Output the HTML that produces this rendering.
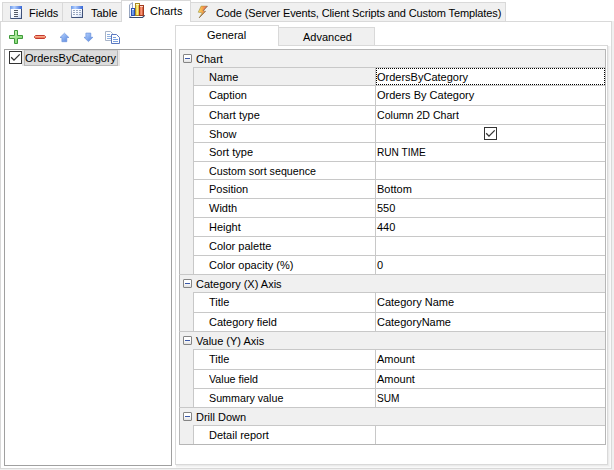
<!DOCTYPE html>
<html><head><meta charset="utf-8">
<style>
*{box-sizing:border-box;margin:0;padding:0}
html,body{width:614px;height:470px;overflow:hidden;background:#fff}
body{position:relative;font-family:"Liberation Sans",sans-serif;font-size:11px;color:#000}
.a{position:absolute}
.t{position:absolute;white-space:nowrap;line-height:13px}
.tab{position:absolute;background:#f0f0f0;border:1px solid #d9d9d9;border-bottom:none}
.hl{position:absolute;height:1px;background:#c8c8c8}
.vl{position:absolute;width:1px;background:#c8c8c8}
.cb{position:absolute;left:183px;width:9px;height:9px;border:1px solid #858585;border-radius:1px;background:linear-gradient(#fff 40%,#e2e2e2)}
.cb::after{content:"";position:absolute;left:1px;top:3px;width:5px;height:1px;background:#3a58a8}
.ck{position:absolute;width:13px;height:13px;border:1px solid #333;background:#fff}
</style></head><body>
<!-- main panel -->
<div class="a" style="left:612px;top:21px;width:2px;height:449px;background:#f0f0f0"></div>
<div class="a" style="left:0;top:469px;width:614px;height:1px;background:#f0f0f0"></div>
<div class="a" style="left:0;top:21px;width:612px;height:448px;border:1px solid #d9d9d9;background:#fff"></div>

<!-- top tabs -->
<div class="tab" style="left:2px;top:2px;width:61px;height:19px"></div>
<div class="tab" style="left:62px;top:2px;width:60px;height:19px"></div>
<div class="tab" style="left:190px;top:2px;width:316px;height:19px"></div>
<div class="a" style="left:121px;top:0;width:70px;height:22px;background:#fff;border:1px solid #d9d9d9;border-bottom:none"></div>

<div class="t" style="left:29px;top:7px">Fields</div>
<div class="t" style="left:91px;top:7px">Table</div>
<div class="t" style="left:150px;top:5px">Charts</div>
<div class="t" style="left:216px;top:7px;letter-spacing:-0.12px">Code (Server Events, Client Scripts and Custom Templates)</div>

<!-- listbox -->
<div class="a" style="left:4px;top:49px;width:168px;height:417px;border:1px solid #a0a0a0;background:#fff"></div>
<div class="a" style="left:9px;top:51px;width:13px;height:13px;border:1px solid #333"></div>
<div class="a" style="left:22px;top:50px;width:98px;height:16px;background:#e6e6e6"></div>
<div class="a" style="left:24px;top:50px;width:94px;height:16px;background:#dcdcdc;border:1px solid #b8b8b8;border-top-color:#cfcfcf"></div>
<div class="t" style="left:25px;top:52px">OrdersByCategory</div>

<!-- right page -->
<div class="a" style="left:175px;top:45px;width:433px;height:420px;border:1px solid #d9d9d9;background:#fff"></div>
<div class="a" style="left:608px;top:46px;width:1px;height:420px;background:#ebebeb"></div>
<div class="a" style="left:609px;top:46px;width:1px;height:421px;background:#f3f3f3"></div>
<div class="a" style="left:610px;top:46px;width:1px;height:422px;background:#f9f9f9"></div>
<div class="a" style="left:176px;top:465px;width:433px;height:1px;background:#ebebeb"></div>
<div class="a" style="left:176px;top:466px;width:434px;height:1px;background:#f3f3f3"></div>
<div class="a" style="left:176px;top:467px;width:435px;height:1px;background:#f9f9f9"></div>
<div class="a" style="left:278px;top:27px;width:97px;height:19px;border:1px solid #d9d9d9;background:#f0f0f0"></div>
<div class="a" style="left:175px;top:25px;width:104px;height:21px;border:1px solid #d9d9d9;border-bottom:none;background:#fff"></div>
<div class="t" style="left:207px;top:29px">General</div>
<div class="t" style="left:303px;top:31px">Advanced</div>

<!-- property grid -->
<div class="a" style="left:179px;top:49px;width:427px;height:396px;border:1px solid #b6b6b6;background:#f0f0f0"></div>
<div class="cb" style="top:54px"></div>
<div class="t" style="left:196px;top:53px">Chart</div>
<div class="hl" style="left:193px;top:67px;width:412px"></div>
<div class="a" style="left:194px;top:68px;width:181px;height:17px;background:#f0f0f0"></div>
<div class="a" style="left:376px;top:68px;width:229px;height:17px;background:#fff"></div>
<div class="vl" style="left:193px;top:67px;height:18px"></div>
<div class="vl" style="left:375px;top:67px;height:18px"></div>
<div class="t" style="left:209px;top:71px">Name</div>
<div class="t" style="left:377px;top:71px">OrdersByCategory</div>
<div class="a" style="left:376px;top:68px;width:229px;height:17px;border:1px dotted #000"></div>
<div class="hl" style="left:193px;top:85px;width:412px"></div>
<div class="a" style="left:194px;top:86px;width:181px;height:19px;background:#fff"></div>
<div class="a" style="left:376px;top:86px;width:229px;height:19px;background:#fff"></div>
<div class="vl" style="left:193px;top:85px;height:20px"></div>
<div class="vl" style="left:375px;top:85px;height:20px"></div>
<div class="t" style="left:209px;top:89px">Caption</div>
<div class="t" style="left:377px;top:89px">Orders By Category</div>
<div class="hl" style="left:193px;top:105px;width:412px"></div>
<div class="a" style="left:194px;top:106px;width:181px;height:18px;background:#fff"></div>
<div class="a" style="left:376px;top:106px;width:229px;height:18px;background:#fff"></div>
<div class="vl" style="left:193px;top:105px;height:19px"></div>
<div class="vl" style="left:375px;top:105px;height:19px"></div>
<div class="t" style="left:209px;top:109px">Chart type</div>
<div class="t" style="left:377px;top:109px;transform:scaleX(0.963);transform-origin:0 0">Column 2D Chart</div>
<div class="hl" style="left:193px;top:124px;width:412px"></div>
<div class="a" style="left:194px;top:125px;width:181px;height:17px;background:#fff"></div>
<div class="a" style="left:376px;top:125px;width:229px;height:17px;background:#fff"></div>
<div class="vl" style="left:193px;top:124px;height:18px"></div>
<div class="vl" style="left:375px;top:124px;height:18px"></div>
<div class="t" style="left:209px;top:128px">Show</div>
<div class="ck" style="left:484px;top:127px"></div><svg class="a" style="left:484px;top:127px" width="13" height="13" viewBox="0 0 13 13"><path d="M2.2 6.3 L5 9.1 L10.7 3.4" fill="none" stroke="#333" stroke-width="1.3"/></svg>
<div class="hl" style="left:193px;top:142px;width:412px"></div>
<div class="a" style="left:194px;top:143px;width:181px;height:18px;background:#fff"></div>
<div class="a" style="left:376px;top:143px;width:229px;height:18px;background:#fff"></div>
<div class="vl" style="left:193px;top:142px;height:19px"></div>
<div class="vl" style="left:375px;top:142px;height:19px"></div>
<div class="t" style="left:209px;top:146px">Sort type</div>
<div class="t" style="left:377px;top:146px;transform:scaleX(0.92);transform-origin:0 0">RUN TIME</div>
<div class="hl" style="left:193px;top:161px;width:412px"></div>
<div class="a" style="left:194px;top:162px;width:181px;height:17px;background:#fff"></div>
<div class="a" style="left:376px;top:162px;width:229px;height:17px;background:#fff"></div>
<div class="vl" style="left:193px;top:161px;height:18px"></div>
<div class="vl" style="left:375px;top:161px;height:18px"></div>
<div class="t" style="left:209px;top:165px;transform:scaleX(0.972);transform-origin:0 0">Custom sort sequence</div>
<div class="hl" style="left:193px;top:179px;width:412px"></div>
<div class="a" style="left:194px;top:180px;width:181px;height:18px;background:#fff"></div>
<div class="a" style="left:376px;top:180px;width:229px;height:18px;background:#fff"></div>
<div class="vl" style="left:193px;top:179px;height:19px"></div>
<div class="vl" style="left:375px;top:179px;height:19px"></div>
<div class="t" style="left:209px;top:183px">Position</div>
<div class="t" style="left:377px;top:183px">Bottom</div>
<div class="hl" style="left:193px;top:198px;width:412px"></div>
<div class="a" style="left:194px;top:199px;width:181px;height:18px;background:#fff"></div>
<div class="a" style="left:376px;top:199px;width:229px;height:18px;background:#fff"></div>
<div class="vl" style="left:193px;top:198px;height:19px"></div>
<div class="vl" style="left:375px;top:198px;height:19px"></div>
<div class="t" style="left:209px;top:202px">Width</div>
<div class="t" style="left:377px;top:202px">550</div>
<div class="hl" style="left:193px;top:217px;width:412px"></div>
<div class="a" style="left:194px;top:218px;width:181px;height:18px;background:#fff"></div>
<div class="a" style="left:376px;top:218px;width:229px;height:18px;background:#fff"></div>
<div class="vl" style="left:193px;top:217px;height:19px"></div>
<div class="vl" style="left:375px;top:217px;height:19px"></div>
<div class="t" style="left:209px;top:221px">Height</div>
<div class="t" style="left:377px;top:221px">440</div>
<div class="hl" style="left:193px;top:236px;width:412px"></div>
<div class="a" style="left:194px;top:237px;width:181px;height:18px;background:#fff"></div>
<div class="a" style="left:376px;top:237px;width:229px;height:18px;background:#fff"></div>
<div class="vl" style="left:193px;top:236px;height:19px"></div>
<div class="vl" style="left:375px;top:236px;height:19px"></div>
<div class="t" style="left:209px;top:240px">Color palette</div>
<div class="hl" style="left:193px;top:255px;width:412px"></div>
<div class="a" style="left:194px;top:256px;width:181px;height:18px;background:#fff"></div>
<div class="a" style="left:376px;top:256px;width:229px;height:18px;background:#fff"></div>
<div class="vl" style="left:193px;top:255px;height:19px"></div>
<div class="vl" style="left:375px;top:255px;height:19px"></div>
<div class="t" style="left:209px;top:259px">Color opacity (%)</div>
<div class="t" style="left:377px;top:259px">0</div>
<div class="hl" style="left:179px;top:274px;width:426px"></div>
<div class="cb" style="top:279px"></div>
<div class="t" style="left:196px;top:278px">Category (X) Axis</div>
<div class="hl" style="left:193px;top:292px;width:412px"></div>
<div class="a" style="left:194px;top:293px;width:181px;height:19px;background:#fff"></div>
<div class="a" style="left:376px;top:293px;width:229px;height:19px;background:#fff"></div>
<div class="vl" style="left:193px;top:292px;height:20px"></div>
<div class="vl" style="left:375px;top:292px;height:20px"></div>
<div class="t" style="left:209px;top:296px">Title</div>
<div class="t" style="left:377px;top:296px">Category Name</div>
<div class="hl" style="left:193px;top:312px;width:412px"></div>
<div class="a" style="left:194px;top:313px;width:181px;height:18px;background:#fff"></div>
<div class="a" style="left:376px;top:313px;width:229px;height:18px;background:#fff"></div>
<div class="vl" style="left:193px;top:312px;height:19px"></div>
<div class="vl" style="left:375px;top:312px;height:19px"></div>
<div class="t" style="left:209px;top:316px">Category field</div>
<div class="t" style="left:377px;top:316px">CategoryName</div>
<div class="hl" style="left:179px;top:331px;width:426px"></div>
<div class="cb" style="top:336px"></div>
<div class="t" style="left:196px;top:335px">Value (Y) Axis</div>
<div class="hl" style="left:193px;top:349px;width:412px"></div>
<div class="a" style="left:194px;top:350px;width:181px;height:19px;background:#fff"></div>
<div class="a" style="left:376px;top:350px;width:229px;height:19px;background:#fff"></div>
<div class="vl" style="left:193px;top:349px;height:20px"></div>
<div class="vl" style="left:375px;top:349px;height:20px"></div>
<div class="t" style="left:209px;top:353px">Title</div>
<div class="t" style="left:377px;top:353px">Amount</div>
<div class="hl" style="left:193px;top:369px;width:412px"></div>
<div class="a" style="left:194px;top:370px;width:181px;height:18px;background:#fff"></div>
<div class="a" style="left:376px;top:370px;width:229px;height:18px;background:#fff"></div>
<div class="vl" style="left:193px;top:369px;height:19px"></div>
<div class="vl" style="left:375px;top:369px;height:19px"></div>
<div class="t" style="left:209px;top:373px;transform:scaleX(0.97);transform-origin:0 0">Value field</div>
<div class="t" style="left:377px;top:373px">Amount</div>
<div class="hl" style="left:193px;top:388px;width:412px"></div>
<div class="a" style="left:194px;top:389px;width:181px;height:18px;background:#fff"></div>
<div class="a" style="left:376px;top:389px;width:229px;height:18px;background:#fff"></div>
<div class="vl" style="left:193px;top:388px;height:19px"></div>
<div class="vl" style="left:375px;top:388px;height:19px"></div>
<div class="t" style="left:209px;top:392px;transform:scaleX(0.973);transform-origin:0 0">Summary value</div>
<div class="t" style="left:377px;top:392px;transform:scaleX(0.92);transform-origin:0 0">SUM</div>
<div class="hl" style="left:179px;top:407px;width:426px"></div>
<div class="cb" style="top:412px"></div>
<div class="t" style="left:196px;top:411px">Drill Down</div>
<div class="hl" style="left:193px;top:425px;width:412px"></div>
<div class="a" style="left:194px;top:426px;width:181px;height:18px;background:#fff"></div>
<div class="a" style="left:376px;top:426px;width:229px;height:18px;background:#fff"></div>
<div class="vl" style="left:193px;top:425px;height:19px"></div>
<div class="vl" style="left:375px;top:425px;height:19px"></div>
<div class="t" style="left:209px;top:429px">Detail report</div>
<!-- icons: fields -->
<svg class="a" style="left:10px;top:6px" width="12" height="13" viewBox="0 0 12 13">
<defs><linearGradient id="tb" x1="0" y1="0" x2="1" y2="0"><stop offset="0" stop-color="#6a98e8"/><stop offset=".35" stop-color="#b4d0ff"/><stop offset="1" stop-color="#3565d5"/></linearGradient>
<linearGradient id="bd" x1="0" y1="0" x2="1" y2="1"><stop offset="0" stop-color="#ffffff"/><stop offset=".6" stop-color="#f4f8ff"/><stop offset="1" stop-color="#c4d4f0"/></linearGradient>
<linearGradient id="lb" x1="0" y1="0" x2="0" y2="1"><stop offset="0" stop-color="#b8c4dc"/><stop offset="1" stop-color="#6a7a9a"/></linearGradient></defs>
<rect x="0" y="0" width="12" height="13" fill="#3e5078"/>
<rect x="0" y="3" width="1" height="10" fill="url(#lb)"/>
<rect x="0" y="0" width="12" height="3" fill="url(#tb)"/>
<rect x="1" y="3" width="10" height="9" fill="url(#bd)"/>
<g fill="#545a66"><rect x="4" y="4" width="4" height="1"/><rect x="4" y="6" width="4" height="1"/><rect x="4" y="8" width="4" height="1"/><rect x="4" y="10" width="4" height="1"/></g>
</svg>
<!-- table -->
<svg class="a" style="left:71px;top:6px" width="12" height="12" viewBox="0 0 12 12">
<rect x="0" y="0" width="12" height="12" fill="#3e5078"/>
<rect x="0" y="3" width="1" height="9" fill="url(#lb)"/>
<rect x="0" y="0" width="12" height="3" fill="url(#tb)"/>
<rect x="1" y="3" width="10" height="8" fill="url(#bd)"/>
<g fill="#9aa8c0"><rect x="2" y="4" width="2" height="1"/><rect x="5" y="4" width="2" height="1"/><rect x="8" y="4" width="2" height="1"/>
<rect x="2" y="6" width="2" height="1"/><rect x="5" y="6" width="2" height="1"/><rect x="8" y="6" width="2" height="1"/>
<rect x="2" y="8" width="2" height="1"/><rect x="5" y="8" width="2" height="1"/><rect x="8" y="8" width="2" height="1"/></g>
</svg>
<!-- charts -->
<svg class="a" style="left:129px;top:2px" width="17" height="17" viewBox="0 0 17 17">
<defs>
<linearGradient id="bb" x1="0" x2="1"><stop offset="0" stop-color="#3a6ad8"/><stop offset=".45" stop-color="#8ab8f8"/><stop offset="1" stop-color="#2a58c0"/></linearGradient>
<linearGradient id="yb" x1="0" x2="1"><stop offset="0" stop-color="#e0b818"/><stop offset=".45" stop-color="#fff490"/><stop offset="1" stop-color="#d0a000"/></linearGradient>
<linearGradient id="rb" x1="0" x2="1"><stop offset="0" stop-color="#d85030"/><stop offset=".45" stop-color="#ffa080"/><stop offset="1" stop-color="#b83818"/></linearGradient>
</defs>
<path d="M0.5 2.8 L3.5 0.6 L3.5 13 L0.5 15.5 Z" fill="#f4f7fc" stroke="#98a6c0" stroke-width="1"/>
<path d="M0.5 15.5 L13.5 15.5 L15.8 13.3" fill="none" stroke="#34486e" stroke-width="1.1"/>
<rect x="2.5" y="6.5" width="3" height="7" fill="url(#bb)" stroke="#2a50b0" stroke-width="1"/>
<rect x="6.5" y="1.5" width="4" height="12" fill="url(#yb)" stroke="#a88a20" stroke-width="1"/>
<rect x="10.5" y="3.5" width="4" height="10" fill="url(#rb)" stroke="#a03a20" stroke-width="1"/>
<rect x="3" y="7" width="2" height="1" fill="#e0ecff"/>
<rect x="7" y="2" width="3" height="1" fill="#fffad0"/>
<rect x="11" y="4" width="3" height="1" fill="#ffd8c8"/>
</svg>
<!-- lightning -->
<svg class="a" style="left:197px;top:5px" width="12" height="14" viewBox="0 0 12 14">
<defs><linearGradient id="lg" x1="0" y1="0" x2="1" y2="0"><stop offset="0" stop-color="#f8e060"/><stop offset=".5" stop-color="#f8a048"/><stop offset="1" stop-color="#f05a78"/></linearGradient></defs>
<path d="M4.1 1.1 L10.4 1.1 L6 5.9 L8.5 6.2 L2.2 12.8 L5.2 7.8 L1.2 7.2 Z" fill="url(#lg)" stroke="#9a9040" stroke-width=".55" stroke-linejoin="round"/>
<path d="M10.4 1.1 L6 5.9 M8.5 6.2 L2.2 12.8" fill="none" stroke="#704848" stroke-width=".6"/>
</svg>
<!-- toolbar: plus -->
<svg class="a" style="left:9px;top:30px" width="14" height="14" viewBox="0 0 14 14">
<defs><linearGradient id="gp" x1="0" y1="0" x2="1" y2="1"><stop offset="0" stop-color="#d8ffc8"/><stop offset="1" stop-color="#70cc60"/></linearGradient></defs>
<path d="M5.5 0.5 H8.5 V5.5 H13.5 V8.5 H8.5 V13.5 H5.5 V8.5 H0.5 V5.5 H5.5 Z" fill="url(#gp)" stroke="#3f9a3a" stroke-width="1" stroke-linejoin="round"/>
</svg>
<!-- minus -->
<svg class="a" style="left:34px;top:35px" width="12" height="4" viewBox="0 0 12 4">
<defs><linearGradient id="gm" x1="0" y1="0" x2="0" y2="1"><stop offset="0" stop-color="#ffd0b0"/><stop offset="1" stop-color="#e85a3a"/></linearGradient></defs>
<path d="M1.5 .5 H10.5 L11.5 1.5 V2.5 L10.5 3.5 H1.5 L.5 2.5 V1.5 Z" fill="url(#gm)" stroke="#c43a30" stroke-width="1"/>
</svg>
<!-- up -->
<svg class="a" style="left:59px;top:32px" width="11" height="11" viewBox="0 0 11 11">
<defs><linearGradient id="ga" x1="0" y1="0" x2="1" y2="1"><stop offset="0" stop-color="#c0d8ff"/><stop offset=".5" stop-color="#88aef0"/><stop offset="1" stop-color="#5a84d8"/></linearGradient></defs>
<path d="M5.45 1.2 L9.9 5.5 H7.8 V9.7 H2.9 V5.5 H1 Z" fill="url(#ga)" stroke="#6a92dc" stroke-width=".7" stroke-linejoin="round"/>
</svg>
<!-- down -->
<svg class="a" style="left:83px;top:32px" width="11" height="11" viewBox="0 0 11 11">
<path d="M2.9 1.1 H7.8 V5.3 H9.9 L5.45 9.6 L1 5.3 H2.9 Z" fill="url(#ga)" stroke="#6a92dc" stroke-width=".7" stroke-linejoin="round"/>
</svg>
<!-- copy -->
<svg class="a" style="left:105px;top:31px" width="16" height="14" viewBox="0 0 16 14">
<path d="M.5 .5 H5.5 L7.5 2.5 V9.5 H.5 Z" fill="#fff" stroke="#a8b4c8" stroke-width="1"/>
<g fill="#8fb0e0"><rect x="2" y="3" width="3" height="1"/><rect x="2" y="5" width="4" height="1"/><rect x="2" y="7" width="4" height="1"/></g>
<path d="M6.5 3.5 H11.5 L14.5 6.5 V12.5 H6.5 Z" fill="#fff" stroke="#5a78c0" stroke-width="1"/>
<g fill="#7aa0e0"><rect x="8" y="6" width="3" height="1"/><rect x="8" y="8" width="5" height="1"/><rect x="8" y="10" width="5" height="1"/></g>
</svg>
<!-- list checkbox check -->
<svg class="a" style="left:9px;top:51px" width="13" height="13" viewBox="0 0 13 13">
<path d="M2.2 6.3 L5 9.1 L10.7 3.4" fill="none" stroke="#333" stroke-width="1.3"/>
</svg>

</body></html>
